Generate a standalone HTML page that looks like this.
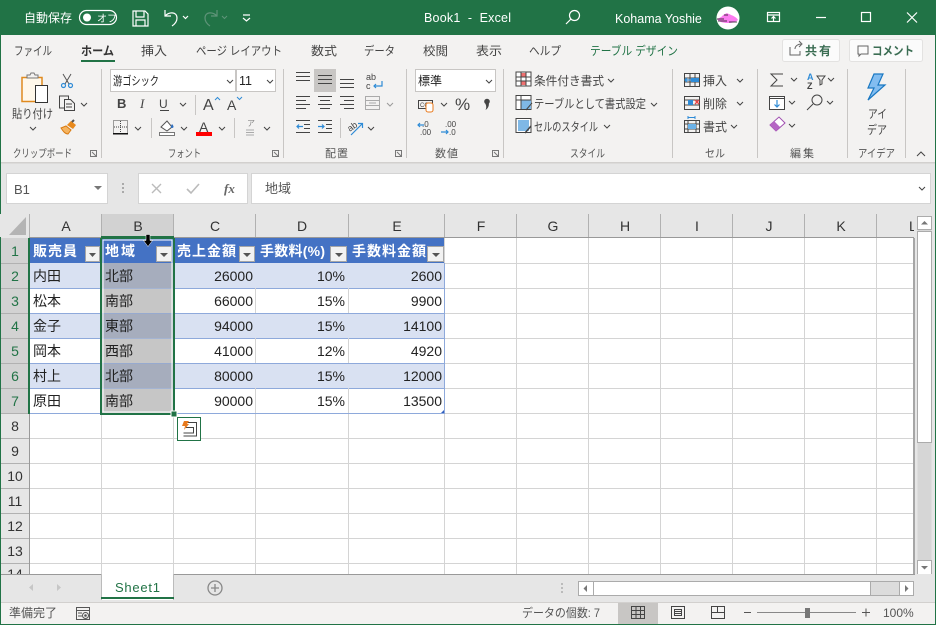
<!DOCTYPE html>
<html lang="ja"><head><meta charset="utf-8"><title>Book1 - Excel</title>
<style>
html,body{margin:0;padding:0;background:#e6e6e6;width:936px;height:625px;overflow:hidden}
svg{display:block;position:absolute;left:0;top:0}
text{font-family:"Liberation Sans","Noto Sans CJK JP",sans-serif;fill:#333;font-size:12px}
.t{font-size:12px;fill:#444}
.g{font-size:12px;fill:#666}
.w{fill:#fff}
.c{font-size:14px;fill:#222}
.h{font-size:14px;fill:#fff;font-weight:700}
.r{font-size:14px;fill:#222;text-anchor:end}
.ch{font-size:14px;fill:#333;text-anchor:middle}
.rh{font-size:14px;fill:#333;text-anchor:middle}
.ic{fill:none;stroke:#444;stroke-width:1}
.blue{fill:none;stroke:#2e8bd6;stroke-width:1.2}
.chev{fill:none;stroke:#444;stroke-width:1}
.wl{fill:none;stroke:#fff;stroke-width:1.2}
</style></head><body>
<svg width="936" height="625" viewBox="0 0 936 625" xmlns="http://www.w3.org/2000/svg">
<defs><path id="cv" d="M0 0l3 3 3-3" class="chev"/></defs>
<rect width="936" height="625" fill="#e6e6e6"/>
<!-- title bar -->
<rect width="936" height="35" fill="#217346"/>
<text x="24" y="22" class="w" style="font-size:12px">自動保存</text>
<rect x="79.500" y="10.500" width="37" height="14" rx="7" class="wl" stroke-width="1"/>
<circle cx="87" cy="17.500" r="4" fill="#fff"/>
<text x="97" y="22" class="w" style="font-size:10px">オフ</text>
<g class="wl"><path d="M133 11h12l3 3v12h-15z"/><path d="M136 11v6h8v-6M136 26v-6h9v6"/></g>
<path d="M165 10v6h6M165 16c3-4 12-5 12 2 0 3-2 6-5 8" class="wl"/>
<path d="M183 16l2.500 2.500 2.500-2.500" class="wl" stroke-width="1"/>
<path d="M217 10v6h-6M217 16c-3-4-12-5-12 2 0 3 2 6 5 8" fill="none" stroke="#5f9479" stroke-width="1.200"/>
<path d="M222 16l2.500 2.500 2.500-2.500" fill="none" stroke="#5f9479"/>
<path d="M243 15h7M243 18l3.500 3 3.500-3" class="wl" stroke-width="1"/>
<text x="424" y="22" class="w" style="font-size:12.500px" textLength="87" lengthAdjust="spacing">Book1&#160;&#160;-&#160;&#160;Excel</text>
<circle cx="574.500" cy="15.500" r="5" class="wl"/><path d="M571 19l-5 5" class="wl"/>
<text x="615" y="23" class="w" style="font-size:12.500px">Kohama Yoshie</text>
<circle cx="728" cy="18" r="11.500" fill="#fff"/>
<path d="M717 19c2-1 5-2 6-4l4-2c1 1 3 1 4 2 3 1 6 3 7 5-3 2-6 3-10 3-5 0-9-1-11-4z" fill="#fb7cf0"/>
<path d="M717 19h7M718 21h9M724 15h4M729 22h8" stroke="#111" fill="none" stroke-width=".8"/>
<g class="wl" stroke-width="1"><rect x="767.500" y="12.500" width="12" height="9"/><path d="M767.500 15h12M773.500 21v-4M771.500 18.500l2-2 2 2"/></g>
<path d="M816 17.500h10" class="wl" stroke-width="1"/>
<rect x="861.500" y="12.500" width="9" height="9" class="wl" stroke-width="1"/>
<path d="M907 12.500l10 10M917 12.500l-10 10" class="wl" stroke-width="1"/>
<!-- ribbon bg -->
<rect y="35" width="936" height="127" fill="#f3f2f1"/>
<rect y="162" width="936" height="1.500" fill="#d2d0ce"/>
<rect x="0" y="35" width="1" height="590" fill="#217346"/>
<rect x="935" y="35" width="1" height="590" fill="#217346"/>
<!-- tabs -->
<g class="t">
<text x="14" y="55" class="t" textLength="38" lengthAdjust="spacingAndGlyphs">ファイル</text>
<text x="81" y="55" style="font-size:12px;fill:#333;font-weight:700" textLength="33" lengthAdjust="spacingAndGlyphs">ホーム</text>
<text x="141" y="55" class="t" textLength="26" lengthAdjust="spacingAndGlyphs">挿入</text>
<text x="196" y="55" class="t" textLength="86" lengthAdjust="spacingAndGlyphs">ページ レイアウト</text>
<text x="311" y="55" class="t" textLength="26" lengthAdjust="spacingAndGlyphs">数式</text>
<text x="364" y="55" class="t" textLength="31" lengthAdjust="spacingAndGlyphs">データ</text>
<text x="423" y="55" class="t" textLength="25" lengthAdjust="spacingAndGlyphs">校閲</text>
<text x="476" y="55" class="t" textLength="26" lengthAdjust="spacingAndGlyphs">表示</text>
<text x="529" y="55" class="t" textLength="32" lengthAdjust="spacingAndGlyphs">ヘルプ</text>
<text x="590" y="55" style="font-size:12px;fill:#217346" textLength="88" lengthAdjust="spacingAndGlyphs">テーブル デザイン</text>
</g>
<rect x="81" y="60" width="34" height="2" fill="#217346"/>
<rect x="782.500" y="39.500" width="57" height="22" rx="2" fill="#fbfbfb" stroke="#e3e2e1"/>
<path d="M790 47v8h10v-4M795 49c0-3 3-5 6-5M799 41l3 3-3 3" fill="none" stroke="#666"/>
<text x="805" y="55" style="font-size:12px;font-weight:700;fill:#3c6e54" textLength="26">共有</text>
<rect x="849.500" y="39.500" width="73" height="22" rx="2" fill="#fbfbfb" stroke="#e3e2e1"/>
<path d="M858 46h10v8h-7l-2 2v-2h-1z" fill="none" stroke="#666"/>
<text x="872" y="55" style="font-size:12px;font-weight:700;fill:#3c6e54" textLength="42" lengthAdjust="spacingAndGlyphs">コメント</text>
<!-- separators -->
<g fill="#c8c6c4">
<rect x="101" y="69" width="1" height="89"/><rect x="283" y="69" width="1" height="89"/><rect x="406" y="69" width="1" height="89"/><rect x="503" y="69" width="1" height="89"/><rect x="672" y="69" width="1" height="89"/><rect x="757" y="69" width="1" height="89"/><rect x="847" y="69" width="1" height="89"/><rect x="905" y="69" width="1" height="89"/>
<rect x="195" y="95" width="1" height="20"/><rect x="151" y="118" width="1" height="20"/><rect x="234" y="118" width="1" height="20"/><rect x="340" y="118" width="1" height="20"/>
</g>
<!-- clipboard -->
<rect x="22" y="77.500" width="20" height="24" fill="#fff8ea" stroke="#e08a1e" stroke-width="1.500"/>
<path d="M27 78v-3h3l1-2h3l1 2h3v3z" fill="#f3f2f1" stroke="#777"/>
<rect x="35.500" y="85.500" width="12" height="17" fill="#fff" stroke="#333"/>
<text x="12" y="118" style="font-size:12px;fill:#444" textLength="41" lengthAdjust="spacingAndGlyphs">貼り付け</text>
<use href="#cv" x="30" y="127"/>
<path d="M63 74l6 10M71 74l-6 10" fill="none" stroke="#555"/><circle cx="63.500" cy="85.500" r="2" class="blue"/><circle cx="70.500" cy="85.500" r="2" class="blue"/>
<g fill="none" stroke="#444"><path d="M64 108h-4.500v-12h9v3"/><path d="M64.500 99.500h6l4 4v7h-10zM66 104h6M66 107h6"/></g>
<use href="#cv" x="81" y="103"/>
<path d="M71 121l5 4-3 4-6-4z" fill="#e8891c"/><path d="M61 128l5-2 5 4-3 4c-3 0-5-3-7-6z" fill="#f5b460" stroke="#d97a10"/><path d="M72 122l2-2" stroke="#555" stroke-width="2"/>
<text x="13" y="157" style="font-size:11px;fill:#555" textLength="59" lengthAdjust="spacingAndGlyphs">クリップボード</text>
<rect x="90.500" y="150.500" width="6" height="6" fill="none" stroke="#777"/><path d="M92 152l4 4" stroke="#777"/>
<!-- font -->
<rect x="110.500" y="69.500" width="125" height="22" fill="#fff" stroke="#c8c6c4"/>
<rect x="236.500" y="69.500" width="39" height="22" fill="#fff" stroke="#c8c6c4"/>
<text x="113" y="85" style="font-size:12px;fill:#222" textLength="46" lengthAdjust="spacingAndGlyphs">游ゴシック</text>
<text x="239" y="85" style="font-size:12.500px;fill:#222">11</text>
<use href="#cv" x="227" y="80"/><use href="#cv" x="267" y="80"/>
<text x="117" y="108" style="font-size:13px;font-weight:700;fill:#444">B</text>
<text x="140" y="108" style="font-size:13px;font-style:italic;fill:#444;font-family:'Liberation Serif',serif">I</text>
<text x="159" y="108" style="font-size:12px;fill:#444">U</text><rect x="160" y="110" width="9" height="1" fill="#444"/>
<use href="#cv" x="180" y="103"/>
<text x="203" y="110" style="font-size:16px;fill:#444">A</text><path d="M215 100l2.500-2.500 2.500 2.500" fill="none" stroke="#2e8bd6"/>
<text x="227" y="110" style="font-size:14px;fill:#444">A</text><path d="M237 97l2.500 2.500 2.500-2.500" fill="none" stroke="#2e8bd6"/>
<rect x="113.500" y="120.500" width="14" height="13" fill="none" stroke="#444" stroke-dasharray="1 1"/><path d="M120.500 121v12M114 127h13" stroke="#444" stroke-dasharray="1 1"/><rect x="113" y="133" width="15" height="1.500" fill="#111"/>
<use href="#cv" x="135" y="127"/>
<path d="M161 127l6-6 5 6-5 4z" fill="#fff" stroke="#555"/><path d="M172 124c2 2 2 4 0 4s-1-2 0-4z" fill="#2e6fc0"/><rect x="159.500" y="132.500" width="15" height="3" fill="#fff" stroke="#777"/>
<use href="#cv" x="181" y="127"/>
<text x="199" y="132" style="font-size:14px;fill:#444">A</text><rect x="196" y="132" width="16" height="4" fill="#f00"/>
<use href="#cv" x="219" y="127"/>
<text x="247" y="126" style="font-size:8px;fill:#888">ア</text><path d="M246 130h8M246 132.500h8M246 135h8" stroke="#aaa"/>
<use href="#cv" x="264" y="127"/>
<text x="168" y="157" style="font-size:11px;fill:#555" textLength="33" lengthAdjust="spacingAndGlyphs">フォント</text>
<rect x="272.500" y="150.500" width="6" height="6" fill="none" stroke="#777"/><path d="M274 152l4 4" stroke="#777"/>
<!-- alignment -->
<rect x="314" y="69" width="22" height="23" fill="#c8c6c4"/>
<g stroke="#444" fill="none">
<path d="M296 72.500h14M296 76.500h14M296 80.500h14"/>
<path d="M318 75.500h14M318 79.500h14M318 83.500h14"/>
<path d="M340 79.500h14M340 83.500h14M340 87.500h14"/>
<path d="M296 96.500h14M296 100.500h10M296 104.500h14M296 108.500h10" />
<path d="M318 96.500h14M320 100.500h10M318 104.500h14M320 108.500h10"/>
<path d="M340 96.500h14M344 100.500h10M340 104.500h14M344 108.500h10"/>
<path d="M296 120.500h14M304 124.500h6M304 128.500h6M296 132.500h14"/>
<path d="M318 120.500h14M326 124.500h6M326 128.500h6M318 132.500h14"/>
</g>
<path d="M303 126.500h-6M299 124.500l-2 2 2 2M318 126.500h6M322 124.500l2 2-2 2" class="blue"/>
<text x="366" y="80" style="font-size:9px;fill:#444">ab</text><text x="366" y="89" style="font-size:9px;fill:#444">c</text><path d="M382 81v5h-8M376 84l-2 2 2 2" class="blue"/>
<rect x="365.500" y="96.500" width="14" height="13" fill="none" stroke="#aaa"/><path d="M365 100.500h15M365 105.500h15M369 103h7" stroke="#aaa" fill="none"/>
<use href="#cv" x="387" y="103" style="opacity:.5"/>
<text x="348" y="130" transform="rotate(-35 352 128)" style="font-size:9px;fill:#444">ab</text><path d="M351 135l11-11M358 123.500h4.500v4.500" class="blue"/>
<use href="#cv" x="368" y="127"/>
<text x="325" y="157" style="font-size:11px;fill:#555" textLength="23">配置</text>
<rect x="395.500" y="150.500" width="6" height="6" fill="none" stroke="#777"/><path d="M397 152l4 4" stroke="#777"/>
<!-- number -->
<rect x="415.500" y="69.500" width="80" height="22" fill="#fff" stroke="#c8c6c4"/>
<text x="418" y="85" style="font-size:12px;fill:#222">標準</text>
<use href="#cv" x="486" y="80"/>
<rect x="418.500" y="100.500" width="14" height="8" fill="none" stroke="#444"/><text x="420" y="107" style="font-size:6px;fill:#444">CCC</text><rect x="426" y="103" width="7" height="9" rx="2" fill="#fff" stroke="#e8791c"/>
<use href="#cv" x="441" y="103"/>
<text x="455" y="110" style="font-size:17px;fill:#444">%</text>
<circle cx="487" cy="101.500" r="2.800" fill="#444"/><path d="M488.500 102c1 3 0 6-3 8 1-2 1-4 0-6z" fill="#444"/>
<text x="422" y="127" style="font-size:8px;fill:#444">.0</text><text x="420" y="135" style="font-size:8px;fill:#444">.00</text>
<path d="M424 125h-6M420 123l-2 2 2 2" class="blue"/>
<text x="445" y="127" style="font-size:8px;fill:#444">.00</text><text x="449" y="135" style="font-size:8px;fill:#444">.0</text>
<path d="M441 132h7M446 130l2 2-2 2" class="blue"/>
<text x="435" y="157" style="font-size:11px;fill:#555" textLength="23">数値</text>
<rect x="492.500" y="150.500" width="6" height="6" fill="none" stroke="#777"/><path d="M494 152l4 4" stroke="#777"/>
<!-- styles -->
<rect x="516" y="72" width="15" height="14" fill="#fff" stroke="#444"/><rect x="521" y="73" width="5" height="4" fill="#f07070"/><rect x="521" y="81" width="5" height="4" fill="#f07070"/><path d="M521 72v14M526 72v14M516 77h15M516 81h15" stroke="#444" fill="none"/>
<text x="534" y="85" style="font-size:12px;fill:#444" textLength="70" lengthAdjust="spacingAndGlyphs">条件付き書式</text><use href="#cv" x="608" y="79"/>
<rect x="516" y="95.500" width="15" height="14" fill="#fff" stroke="#444"/><rect x="521" y="100" width="10" height="9" fill="#7fb8e6"/><path d="M521 96v14M516 100h15M526 110l6-7" stroke="#444" fill="none"/>
<text x="534" y="108" style="font-size:12px;fill:#444" textLength="112" lengthAdjust="spacingAndGlyphs">テーブルとして書式設定</text><use href="#cv" x="651" y="103"/>
<rect x="516" y="118.500" width="15" height="14" fill="#fff" stroke="#444"/><rect x="518" y="120" width="11" height="11" fill="#7fb8e6"/><path d="M525 133l6-7" stroke="#444" stroke-width="1.500"/>
<text x="534" y="131" style="font-size:12px;fill:#444" textLength="64" lengthAdjust="spacingAndGlyphs">セルのスタイル</text><use href="#cv" x="604" y="125"/>
<text x="570" y="157" style="font-size:11px;fill:#555" textLength="35" lengthAdjust="spacingAndGlyphs">スタイル</text>
<!-- cells -->
<g fill="none" stroke="#444"><rect x="684.500" y="73.500" width="15" height="13"/><path d="M684 78h16M684 82h16M690 74v12M695 74v12"/></g><rect x="691" y="78" width="8" height="4" fill="#2e8bd6"/><path d="M692 80h-7M687 78l-2 2 2 2" class="blue"/>
<text x="703" y="85" style="font-size:12px;fill:#444">挿入</text><use href="#cv" x="737" y="79"/>
<g fill="none" stroke="#444"><rect x="684.500" y="96.500" width="15" height="13"/><path d="M684 100h16M684 105h16"/></g><rect x="688" y="100" width="5" height="5" fill="#2e8bd6"/><path d="M695 100l4 4M699 100l-4 4" stroke="#e44" stroke-width="1.300"/>
<text x="703" y="108" style="font-size:12px;fill:#444">削除</text><use href="#cv" x="737" y="102"/>
<path d="M688 117.500h7M688 116v3M695 116v3" stroke="#2e8bd6" fill="none"/>
<g fill="none" stroke="#444"><rect x="684.500" y="120.500" width="15" height="12"/><path d="M684 124h16M684 129h16M688 120v13M696 120v13"/></g><rect x="688" y="124" width="8" height="5" fill="#6bb2e8"/>
<text x="703" y="131" style="font-size:12px;fill:#444">書式</text><use href="#cv" x="731" y="125"/>
<text x="705" y="157" style="font-size:11px;fill:#555" textLength="20" lengthAdjust="spacingAndGlyphs">セル</text>
<!-- editing -->
<path d="M783 74h-12l6 6-6 6h12" fill="none" stroke="#444"/><use href="#cv" x="791" y="78"/>
<text x="807" y="80" style="font-size:9px;font-weight:700;fill:#2e8bd6">A</text><text x="807" y="89" style="font-size:9px;font-weight:700;fill:#444">Z</text><path d="M817 76h8l-3 4v4l-2 1v-5z" fill="none" stroke="#444"/><use href="#cv" x="828" y="78"/>
<rect x="769.500" y="96.500" width="15" height="13" fill="#fff" stroke="#444"/><path d="M769 98.500h16" stroke="#444"/><path d="M777 100v7M774.500 104.500l2.500 2.500 2.500-2.500" class="blue"/><use href="#cv" x="789" y="101"/>
<circle cx="817" cy="100" r="5" fill="none" stroke="#444"/><path d="M813 104l-6 6" stroke="#444" fill="none"/><use href="#cv" x="827" y="101"/>
<path d="M770 125l9-8 6 6-9 8z" fill="#fff" stroke="#a04fb0"/><path d="M770 125l4-4 6 6-4 4z" fill="#b566c4"/><use href="#cv" x="789" y="124"/>
<text x="790" y="157" style="font-size:11px;fill:#555" textLength="24">編集</text>
<!-- ideas -->
<path d="M874 74h9l-5 11h7l-17 15 6-12h-6z" fill="#83bdf0" stroke="#1a78c2" stroke-width="1.200"/>
<text x="868" y="118" style="font-size:12px;fill:#444" textLength="19" lengthAdjust="spacingAndGlyphs">アイ</text>
<text x="867" y="134" style="font-size:12px;fill:#444" textLength="20" lengthAdjust="spacingAndGlyphs">デア</text>
<text x="858" y="157" style="font-size:11px;fill:#555" textLength="37" lengthAdjust="spacingAndGlyphs">アイデア</text>
<path d="M917 156l4-4 4 4" fill="none" stroke="#444"/>
<!-- formula bar -->
<rect x="6.500" y="173.500" width="101" height="30" fill="#fff" stroke="#d4d4d4"/>
<text x="14" y="194" style="font-size:13px;fill:#555">B1</text>
<path d="M94 186h8l-4 4z" fill="#777"/>
<g fill="#aaa"><rect x="122" y="183" width="2" height="2"/><rect x="122" y="187" width="2" height="2"/><rect x="122" y="191" width="2" height="2"/></g>
<rect x="138.500" y="173.500" width="109" height="30" fill="#fff" stroke="#d4d4d4"/>
<path d="M152 184l9 9M161 184l-9 9" stroke="#bbb" stroke-width="1.400" fill="none"/>
<path d="M187 189l4 4 8-9" stroke="#bbb" stroke-width="1.600" fill="none"/>
<text x="224" y="193" style="font-size:13px;font-style:italic;font-weight:700;fill:#666;font-family:'Liberation Serif',serif">fx</text>
<rect x="251.500" y="173.500" width="679" height="30" fill="#fff" stroke="#d4d4d4"/>
<text x="265" y="193" style="font-size:13px;fill:#555">地域</text>
<use href="#cv" x="919" y="187"/>
<!-- sheet -->
<rect x="29" y="238" width="885" height="336" fill="#fff"/>
<g stroke="#d4d4d4" fill="none">
<path d="M101.500 238V574M173.500 238V574M255.500 238V574M348.500 238V574M444.500 238V574M516.500 238V574M588.500 238V574M660.500 238V574M732.500 238V574M804.500 238V574M876.500 238V574"/>
<path d="M29 263.500H914M29 288.500H914M29 313.500H914M29 338.500H914M29 363.500H914M29 388.500H914M29 413.500H914M29 438.500H914M29 463.500H914M29 488.500H914M29 513.500H914M29 538.500H914M29 563.500H914"/>
</g>
<!-- table -->
<rect x="29" y="238" width="415" height="25" fill="#4472c4"/>
<rect x="29" y="263" width="415" height="25" fill="#d9e1f2"/>
<rect x="29" y="313" width="415" height="25" fill="#d9e1f2"/>
<rect x="29" y="363" width="415" height="25" fill="#d9e1f2"/>
<path d="M29 288.500H445M29 313.500H445M29 338.500H445M29 363.500H445M29 388.500H445M29 413.500H445M444.500 263V414" stroke="#8ea9db" fill="none"/>
<path d="M101.500 288V313M173.500 288V313M255.500 288V313M348.500 288V313M101.500 338V363M173.500 338V363M255.500 338V363M348.500 338V363M101.500 388V413M173.500 388V413M255.500 388V413M348.500 388V413" stroke="#d4d4d4" fill="none"/>
<!-- selected column -->
<rect x="102" y="239" width="71" height="24" fill="#4472c4"/>
<rect x="102" y="263" width="71" height="25" fill="#a6adbd"/>
<rect x="102" y="288" width="71" height="25" fill="#c6c6c6"/>
<rect x="102" y="313" width="71" height="25" fill="#a6adbd"/>
<rect x="102" y="338" width="71" height="25" fill="#c6c6c6"/>
<rect x="102" y="363" width="71" height="25" fill="#a6adbd"/>
<rect x="102" y="388" width="71" height="25" fill="#c6c6c6"/>
<path d="M102 288.500h71M102 313.500h71M102 338.500h71M102 363.500h71M102 388.500h71" stroke="#8ea9db" opacity=".6"/>
<!-- filter buttons -->
<g fill="#f2f2f2" stroke="#a6a6a6">
<rect x="85.500" y="246.500" width="14" height="15"/><rect x="156.500" y="246.500" width="15" height="15"/><rect x="239.500" y="246.500" width="15" height="15"/><rect x="330.500" y="246.500" width="16" height="15"/><rect x="427.500" y="246.500" width="16" height="15"/>
</g>
<g fill="#555"><path d="M89 253h7l-3.500 4z"/><path d="M160 253h8l-4 4z"/><path d="M243 253h8l-4 4z"/><path d="M335 253h8l-4 4z"/><path d="M432 253h8l-4 4z"/></g>
<text x="33" y="256" class="h" textLength="44">販売員</text>
<text x="105" y="256" class="h" textLength="30">地域</text>
<text x="177" y="256" class="h" textLength="59">売上金額</text>
<text x="260" y="256" class="h" textLength="65">手数料(%)</text>
<text x="352" y="256" class="h" textLength="74">手数料金額</text>
<text x="33" y="281" class="c">内田</text><text x="105" y="281" class="c">北部</text><text x="253" y="281" class="r">26000</text><text x="345" y="281" class="r">10%</text><text x="442" y="281" class="r">2600</text>
<text x="33" y="306" class="c">松本</text><text x="105" y="306" class="c">南部</text><text x="253" y="306" class="r">66000</text><text x="345" y="306" class="r">15%</text><text x="442" y="306" class="r">9900</text>
<text x="33" y="331" class="c">金子</text><text x="105" y="331" class="c">東部</text><text x="253" y="331" class="r">94000</text><text x="345" y="331" class="r">15%</text><text x="442" y="331" class="r">14100</text>
<text x="33" y="356" class="c">岡本</text><text x="105" y="356" class="c">西部</text><text x="253" y="356" class="r">41000</text><text x="345" y="356" class="r">12%</text><text x="442" y="356" class="r">4920</text>
<text x="33" y="381" class="c">村上</text><text x="105" y="381" class="c">北部</text><text x="253" y="381" class="r">80000</text><text x="345" y="381" class="r">15%</text><text x="442" y="381" class="r">12000</text>
<text x="33" y="406" class="c">原田</text><text x="105" y="406" class="c">南部</text><text x="253" y="406" class="r">90000</text><text x="345" y="406" class="r">15%</text><text x="442" y="406" class="r">13500</text>
<path d="M441 413l3-3v3z" fill="#2f5fc0"/>
<!-- selection border -->
<rect x="101" y="238" width="73" height="176" fill="none" stroke="#217346" stroke-width="2"/>
<rect x="103" y="240" width="69" height="172" fill="none" stroke="#fff" stroke-width="1"/>
<rect x="171" y="411" width="6" height="6" fill="#217346" stroke="#fff"/>
<!-- quick analysis -->
<rect x="177.500" y="417.500" width="23" height="23" fill="#fff" stroke="#217346"/>
<path d="M184 422.500h12.500v13.500h-13M186 427.500h7.500v5.500h-10" fill="none" stroke="#444"/>
<path d="M184 421h5l-2 3h2l-5 6 1-4h-3z" fill="#e8791c"/>
<!-- headers -->
<rect x="0" y="214" width="914" height="23" fill="#e6e6e6"/>
<rect x="1" y="238" width="28" height="336" fill="#e6e6e6"/>
<rect x="101" y="214" width="73" height="23" fill="#d2d2d2"/>
<rect x="1" y="238" width="28" height="176" fill="#d2d2d2"/>
<path d="M26 217v18H9z" fill="#b4b4b4"/>
<g stroke="#b1b1b1" fill="none">
<path d="M29.500 214v24M101.500 214v24M173.500 214v24M255.500 214v24M348.500 214v24M444.500 214v24M516.500 214v24M588.500 214v24M660.500 214v24M732.500 214v24M804.500 214v24M876.500 214v24"/>
<path d="M1 263.500h28M1 288.500h28M1 313.500h28M1 338.500h28M1 363.500h28M1 388.500h28M1 413.500h28M1 438.500h28M1 463.500h28M1 488.500h28M1 513.500h28M1 538.500h28M1 563.500h28"/>
</g>
<rect x="29" y="237" width="885" height="1" fill="#999"/>
<rect x="28" y="238" width="2" height="176" fill="#217346"/>
<rect x="29" y="414" width="1" height="160" fill="#999"/>
<rect x="101" y="236" width="73" height="2" fill="#217346"/>
<!-- arrow cursor -->
<path d="M146 234.500h4v6h2.500l-4.500 6-4.500-6h2.500z" fill="#000" stroke="#fff" stroke-width=".5"/>
<text x="66" y="231" class="ch">A</text><text x="138" y="231" class="ch">B</text><text x="215" y="231" class="ch">C</text><text x="302" y="231" class="ch">D</text><text x="397" y="231" class="ch">E</text><text x="481" y="231" class="ch">F</text><text x="553" y="231" class="ch">G</text><text x="625" y="231" class="ch">H</text><text x="697" y="231" class="ch">I</text><text x="769" y="231" class="ch">J</text><text x="841" y="231" class="ch">K</text><text x="909" y="231" style="font-size:14px;fill:#333">L</text>
<text x="15" y="256" class="rh" style="fill:#217346">1</text><text x="15" y="281" class="rh" style="fill:#217346">2</text><text x="15" y="306" class="rh" style="fill:#217346">3</text><text x="15" y="331" class="rh" style="fill:#217346">4</text><text x="15" y="356" class="rh" style="fill:#217346">5</text><text x="15" y="381" class="rh" style="fill:#217346">6</text><text x="15" y="406" class="rh" style="fill:#217346">7</text>
<text x="15" y="431" class="rh">8</text><text x="15" y="456" class="rh">9</text><text x="15" y="481" class="rh">10</text><text x="15" y="506" class="rh">11</text><text x="15" y="531" class="rh">12</text><text x="15" y="556" class="rh">13</text><text x="15" y="579" class="rh">14</text>
<!-- v scrollbar -->
<rect x="914" y="214" width="21" height="388" fill="#e6e6e6"/>
<rect x="917.500" y="229" width="14" height="331" fill="#d6d6d6"/>
<rect x="917.500" y="216.500" width="14" height="13" fill="#fff" stroke="#ababab"/>
<path d="M921 224.500h7l-3.500-3.500z" fill="#777"/>
<rect x="917.500" y="231.500" width="14" height="211" fill="#fff" stroke="#ababab"/>
<rect x="917.500" y="560.500" width="14" height="14" fill="#fff" stroke="#ababab"/>
<path d="M921 566h7l-3.500 3.500z" fill="#777"/>
<rect x="913" y="238" width="2" height="337" fill="#a6a6a6"/>
<!-- tab bar -->
<rect x="1" y="574" width="934" height="28" fill="#e6e6e6"/>
<rect x="1" y="574" width="914" height="1" fill="#999"/>
<path d="M33 584l-4 3.500 4 3.500zM57 584l4 3.500-4 3.500z" fill="#c6c6c6"/>
<rect x="101" y="574" width="73" height="26" fill="#fff"/>
<path d="M101.500 574v26M173.500 574v26" stroke="#bbb"/>
<rect x="101" y="597" width="73" height="2" fill="#217346"/>
<text x="115" y="592" style="font-size:13px;fill:#217346" textLength="45">Sheet1</text>
<circle cx="215" cy="588" r="7" fill="none" stroke="#888" stroke-width="1.300"/><path d="M211 588h8M215 584v8" stroke="#888" stroke-width="1.300"/>
<g fill="#bbb"><rect x="561" y="583" width="2" height="2"/><rect x="561" y="587" width="2" height="2"/><rect x="561" y="591" width="2" height="2"/></g>
<rect x="578.500" y="581.500" width="335" height="14" fill="#dcdcdc" stroke="#ababab"/>
<rect x="593.500" y="581.500" width="277" height="14" fill="#fff" stroke="#ababab"/>
<rect x="578.500" y="581.500" width="15" height="14" fill="#fff" stroke="#ababab"/>
<rect x="899.500" y="581.500" width="14" height="14" fill="#fff" stroke="#ababab"/>
<path d="M587 585v7l-3.500-3.500zM905 585v7l3.500-3.500z" fill="#777"/>
<!-- status bar -->
<rect x="1" y="602" width="934" height="22" fill="#f3f2f1"/>
<rect x="1" y="602" width="934" height="1" fill="#d2d0ce"/>
<rect y="624" width="936" height="1" fill="#217346"/>
<text x="9" y="617" style="font-size:12px;fill:#555">準備完了</text>
<g fill="none" stroke="#555"><rect x="76.500" y="607.500" width="13" height="12"/><path d="M76 610.500h14M78 613h4M78 616h4"/><circle cx="85.500" cy="615.500" r="3" fill="#f3f2f1"/></g><circle cx="85.500" cy="615.500" r="1.300" fill="#555"/>
<text x="522" y="617" style="font-size:12px;fill:#555" textLength="78" lengthAdjust="spacingAndGlyphs">データの個数: 7</text>
<rect x="618" y="603" width="40" height="21" fill="#c8c6c4"/>
<g fill="none" stroke="#444"><rect x="631.500" y="606.500" width="13" height="12"/><path d="M636 606v13M640.500 606v13M631 610.500h14M631 614.500h14"/></g>
<g fill="none" stroke="#444"><rect x="671.500" y="606.500" width="13" height="12"/><rect x="674.500" y="609.500" width="7" height="6"/><path d="M675 611.500h6M675 613.500h6"/></g>
<g fill="none" stroke="#444"><path d="M711.500 618.500v-12h13v12zM711.500 612.500h6v-6M717.500 612.500h7"/></g>
<path d="M757 612.500h99" stroke="#888" fill="none"/>
<path d="M744 612.500h7M862 612.500h8M866 608.500v8" stroke="#555" fill="none"/>
<rect x="805" y="608" width="5" height="10" fill="#777"/>
<text x="883" y="617" style="font-size:12px;fill:#555">100%</text>
</svg>
</body></html>
